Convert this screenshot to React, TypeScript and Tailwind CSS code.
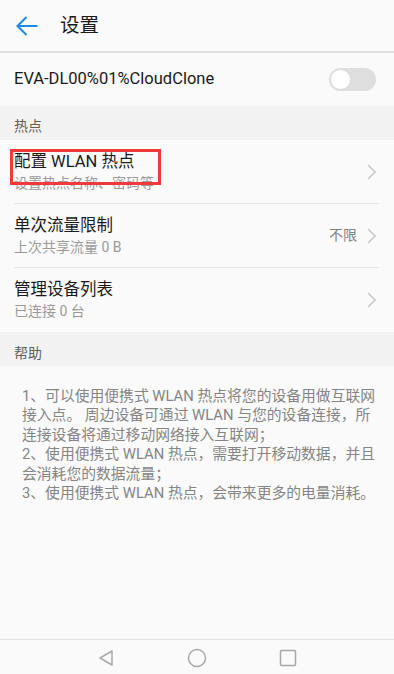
import React from 'react';

const font = { fontFamily: 'Roboto, "Noto Sans CJK SC", sans-serif' } as React.CSSProperties;

function Chevron() {
  return (
    <svg width="9" height="16" viewBox="0 0 9 16" className="shrink-0">
      <polyline points="1,1 8,8 1,15" fill="none" stroke="#c8c8c8" strokeWidth="1.6" />
    </svg>
  );
}

function Row({ title, sub, value, last, boxed }: { title: string; sub: string; value?: string; last?: boolean; boxed?: boolean }) {
  return (
    <div className="relative bg-[#fafafa]">
      <div className="flex h-[63px] items-center pl-[14px] pr-[18px]">
        <div className="flex-1">
          <div className="text-[16.5px] leading-[20px] text-[#1a1a1a] pt-[1px]">{title}</div>
          <div className="text-[14px] leading-[18px] text-[#9a9a9a] mt-[2px]">{sub}</div>
        </div>
        {value && <span className="mr-[10px] text-[14px] text-[#808080]">{value}</span>}
        <Chevron />
      </div>
      {!last && <div className="ml-[14px] mr-[15px] h-px bg-[#e6e6e6]" />}
      {last && <div className="h-px" />}
      {boxed && (
        <div className="pointer-events-none absolute left-[10px] top-[9px] h-[36px] w-[151px] border-[3px] border-[#f0393c]" />
      )}
    </div>
  );
}

const help = [
  '1、可以使用便携式 WLAN 热点将您的设备用做互联网',
  '接入点。 周边设备可通过 WLAN 与您的设备连接，所',
  '连接设备将通过移动网络接入互联网；',
  '2、使用便携式 WLAN 热点，需要打开移动数据，并且',
  '会消耗您的数据流量；',
  '3、使用便携式 WLAN 热点，会带来更多的电量消耗。',
];

export default function App() {
  return (
    <div className="flex h-[674px] w-[394px] flex-col overflow-hidden bg-[#fafafa]" style={font}>
      {/* header */}
      <div className="flex h-[51px] items-center bg-[#fafafa] pl-[15px]">
        <svg width="24" height="22" viewBox="0 0 24 22">
          <path d="M22.5 11H2.5M11.5 2L2.5 11l9 9" fill="none" stroke="#1e88e5" strokeWidth="2" />
        </svg>
        <span className="ml-[21px] text-[19.5px] text-[#1a1a1a]">设置</span>
      </div>
      <div className="h-[2px] bg-[#e0e0e0]" />

      <div className="flex h-[53px] items-center justify-between bg-[#fafafa] pl-[14px] pr-[18px]">
        <span className="text-[16.5px] text-[#1a1a1a]">EVA-DL00%01%CloudClone</span>
        <div className="flex h-[23px] w-[47px] items-center rounded-full bg-[#dedede] px-[2px]">
          <div className="h-[19px] w-[19px] rounded-full bg-white" />
        </div>
      </div>

      <div className="h-[34px] bg-[#f2f2f2] pl-[14px] pt-[12px] text-[14px] leading-[16px] text-[#5f5f5f]">热点</div>

      <Row title="配置 WLAN 热点" sub="设置热点名称、密码等" boxed />
      <Row title="单次流量限制" sub="上次共享流量 0 B" value="不限" />
      <Row title="管理设备列表" sub="已连接 0 台" last />

      <div className="h-[34px] bg-[#f2f2f2] pl-[14px] pt-[13px] text-[14px] leading-[16px] text-[#5f5f5f]">帮助</div>

      <div className="flex-1 bg-[#fafafa] pl-[22px] pt-[21px]">
        {help.map((l, i) => (
          <div key={i} className="whitespace-nowrap text-[14.8px] leading-[19.4px] text-[#858585]">{l}</div>
        ))}
      </div>

      {/* nav bar */}
      <div className="h-px bg-[#e2e2e2]" />
      <div className="flex h-[34px] items-center justify-center gap-[72px] bg-[#fafafa] pt-[2px]">
        <svg width="18" height="18" viewBox="0 0 18 18">
          <path d="M15 2v14L3 9z" fill="none" stroke="#a8a8a8" strokeWidth="1.5" strokeLinejoin="round" />
        </svg>
        <svg width="20" height="20" viewBox="0 0 20 20">
          <circle cx="10" cy="10" r="8.5" fill="none" stroke="#a8a8a8" strokeWidth="1.5" />
        </svg>
        <svg width="18" height="18" viewBox="0 0 18 18">
          <rect x="1.5" y="1.5" width="15" height="15" rx="1" fill="none" stroke="#a8a8a8" strokeWidth="1.5" />
        </svg>
      </div>
    </div>
  );
}
